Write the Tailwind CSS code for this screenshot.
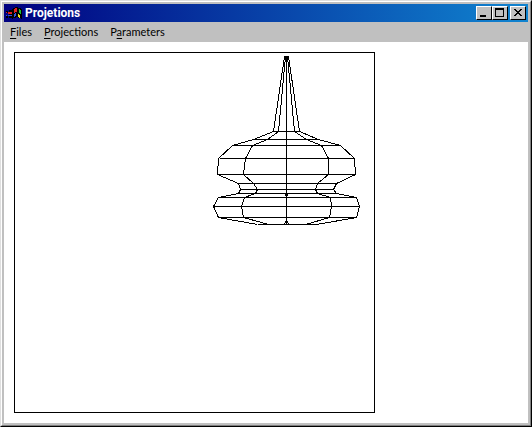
<!DOCTYPE html>
<html lang="en">
<head>
    <meta charset="utf-8">
    <meta name="viewport" content="width=device-width, initial-scale=1">
    <title>Projetions</title>
    <script src="https://cdn.jsdelivr.net/npm/@tailwindcss/browser@4"></script>
</head>
<body class="bg-[#c0c0c0] font-['Roboto','Liberation_Sans',sans-serif] text-black">
    <!-- Window frame: two nested bevels -->
    <div class="flex min-h-screen border border-t-[#dfdfdf] border-l-[#dfdfdf] border-r-black border-b-black">
        <div class="flex flex-1 flex-col border border-t-white border-l-white border-r-[#808080] border-b-[#808080] bg-[#c0c0c0] p-0.5">
            <!-- Title bar -->
            <header class="flex h-[18px] items-center bg-linear-to-r/srgb from-[#000080] to-[#1084d0] px-0.5">
                <svg class="h-4 w-4" viewBox="0 0 16 16" shape-rendering="crispEdges" aria-hidden="true">
                    <path fill="#000" d="M7 3h2v-1h3v1h3v1h1v10h-1v-1h-3v-1h-2v1h-3v1h-1V4h1zM3 5h3v8H3zM0 6h2v2H0zM0 11h2v2H0z"/>
                    <path fill="#e02020" d="M8 4h1V3h2v4H9v1H8zM2 7h4v2H2zM0 7h1v1H0z"/>
                    <path fill="#20c030" d="M13 4h1v1h1v4h-1V8h-1z"/>
                    <path fill="#3050e0" d="M8 9h1V8h1v3H9v1H8zM2 10h4v1H2zM0 10h1v1H0z"/>
                    <path fill="#f0e020" d="M12 9h1v1h1v3h-1v-1h-1z"/>
                </svg>
                <h1 class="ml-[3px] flex-1 text-[12px] leading-4 font-bold text-white">Projetions</h1>
                <div class="flex">
                    <button type="button" aria-label="Minimize" class="h-3.5 w-4 border border-t-white border-l-white border-r-black border-b-black bg-[#c0c0c0]">
                        <svg class="h-3 w-3.5" viewBox="0 0 14 12" shape-rendering="crispEdges"><path d="M3 8h6v2H3z"/></svg>
                    </button>
                    <button type="button" aria-label="Maximize" class="h-3.5 w-4 border border-t-white border-l-white border-r-black border-b-black bg-[#c0c0c0]">
                        <svg class="h-3 w-3.5" viewBox="0 0 14 12" shape-rendering="crispEdges"><path fill-rule="evenodd" d="M2 1h9v9H2zM3 3v6h7V3z"/></svg>
                    </button>
                    <button type="button" aria-label="Close" class="ml-0.5 h-3.5 w-4 border border-t-white border-l-white border-r-black border-b-black bg-[#c0c0c0]">
                        <svg class="h-3 w-3.5" viewBox="0 0 14 12" shape-rendering="crispEdges"><path d="M3 2h2v1h1v1h2V3h1V2h2v1h-1v1H9v1H8v1h1v1h1v1h1v1H9V8H8V7H6v1H5v1H3V8h1V7h1V6h1V5H5V4H4V3H3z"/></svg>
                    </button>
                </div>
            </header>

            <!-- Menu bar -->
            <nav class="flex h-5 items-center font-['Lato','Liberation_Sans',sans-serif] text-[11px] leading-4">
                <button type="button" class="px-1.5"><span class="underline underline-offset-2">F</span>iles</button>
                <button type="button" class="px-1.5"><span class="underline underline-offset-2">P</span>rojections</button>
                <button type="button" class="px-1.5">P<span class="underline underline-offset-2">a</span>rameters</button>
            </nav>

            <!-- Drawing area -->
            <main class="flex-1 bg-white p-2.5">
                <svg class="box-content h-[359px] w-[359px] border border-black" viewBox="14.5 52.5 359 359" fill="none" stroke="#000" stroke-width="1" shape-rendering="crispEdges" role="img" aria-label="Wireframe of a turned solid">
                    <!-- rings seen edge-on -->
                    <path d="M273 131H299M253 139H318M232 145H340M219 158H354M217 174H355M238 183H336M240 189H333M238 193H336M218 197H356M213 206H359M218 217H356M257 224H316"/>
                    <!-- outer profile -->
                    <path d="M284 56L273 131L253 139L232 145L218 158L217 174L238 183L240 189L238 193L218 197L213 206L218 217L257 224"/>
                    <path d="M288 56L299 131L318 139L340 145L354 158L355 174L336 183L333 189L336 193L356 197L359 206L356 217L316 224"/>
                    <!-- inner profile -->
                    <path d="M285 56L278 131L267 139L252 145L245 158L243 174L253 183L257 189L255 193L244 197L241 206L243 217L268 224"/>
                    <path d="M287 56L294 131L306 139L321 145L328 158L328 174L317 183L315 189L317 193L330 197L331 206L329 217L305 224"/>
                    <!-- axis -->
                    <path d="M286 56V224M285 192V195M287 192V195M285 220V222M287 220V222M284 222V224M288 222V224"/>
                    <path fill="#000" d="M285 56H287V59H285Z"/>
                </svg>
            </main>
        </div>
    </div>
</body>
</html>
